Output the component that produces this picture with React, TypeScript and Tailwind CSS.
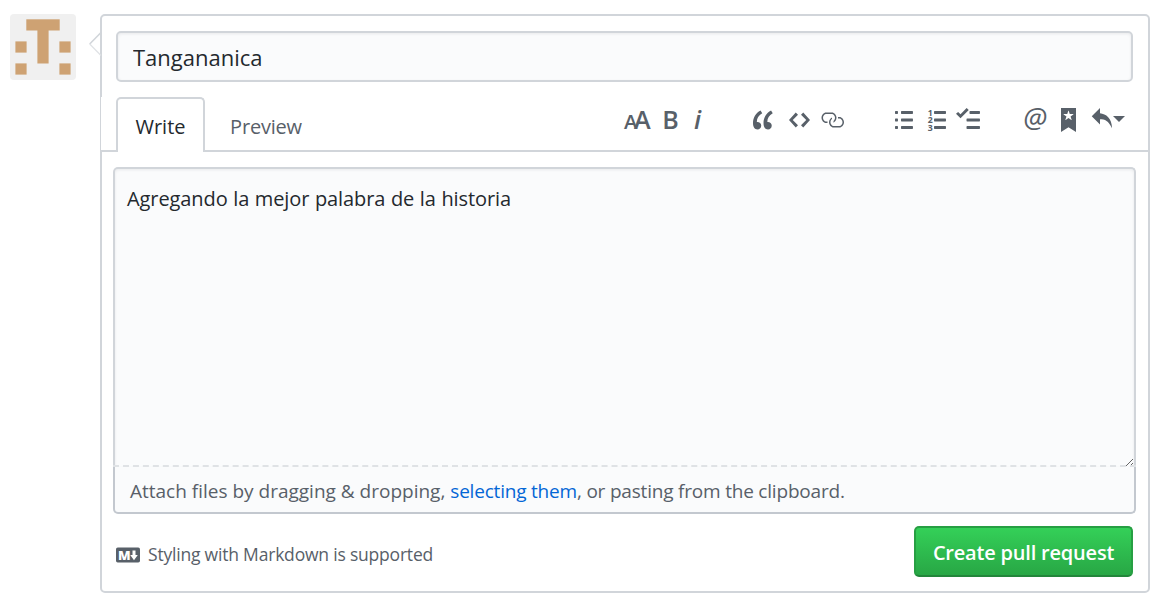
import type { ReactNode } from 'react';

const FONT = "font-['Open_Sans','Noto_Sans',sans-serif]";

type IconProps = { w: number; className?: string; children: ReactNode };

function Icon({ w, className = '', children }: IconProps) {
  return (
    <svg
      viewBox={`0 0 ${w} 16`}
      width={w * 1.5}
      height={24}
      fill="currentColor"
      aria-hidden="true"
      className={`block shrink-0 overflow-visible ${className}`}
    >
      {children}
    </svg>
  );
}

function Avatar() {
  return (
    <svg viewBox="0 0 66 66" className="mt-3.5 block h-[66px] w-[66px] shrink-0 rounded">
      <rect width="66" height="66" fill="#f0f0f0" />
      <g fill="#cea273">
        <rect x="16.3" y="5.3" width="33.4" height="11.2" />
        <rect x="27.4" y="16" width="11.2" height="33.5" />
        <rect x="5.4" y="27.4" width="11.2" height="11.2" />
        <rect x="49.4" y="27.4" width="11.2" height="11.2" />
        <rect x="5.4" y="49.4" width="11.2" height="11.2" />
        <rect x="49.4" y="49.4" width="11.2" height="11.2" />
      </g>
    </svg>
  );
}

function Toolbar() {
  return (
    <div className="flex pt-[11px] text-[#586069]">
      <button type="button" className="mr-3">
        <Icon w={18}>
          <text y="14" fontWeight="600">
            <tspan x="0" fontSize="13.4">A</tspan>
            <tspan x="6.7" fontSize="16.8">A</tspan>
          </text>
        </Icon>
      </button>
      <button type="button" className="mr-4">
        <Icon w={10}>
          <text x="-0.5" y="14" fontSize="16.8" fontWeight="600" textLength="11" lengthAdjust="spacingAndGlyphs">B</text>
        </Icon>
      </button>
      <button type="button" className="mr-[50px]">
        <Icon w={6}>
          <text x="0" y="14" fontSize="17.2" fontWeight="600" fontStyle="italic">i</text>
        </Icon>
      </button>
      <button type="button" className="mr-[15px]">
        <Icon w={14}>
          <path d="M6.16 3.5C3.73 5.06 2.55 6.67 2.55 9.36c.16-.05.3-.05.44-.05 1.27 0 2.5.86 2.5 2.41 0 1.61-1.03 2.61-2.5 2.61-1.9 0-2.99-1.52-2.99-4.25 0-3.8 1.75-6.53 5.02-8.42L6.16 3.5zm7 0c-2.43 1.56-3.61 3.17-3.61 5.86.16-.05.3-.05.44-.05 1.27 0 2.5.86 2.5 2.41 0 1.61-1.03 2.61-2.5 2.61-1.89 0-2.98-1.52-2.98-4.25 0-3.8 1.75-6.53 5.02-8.42l1.14 1.84h-.01z" />
        </Icon>
      </button>
      <button type="button" className="mr-2.5">
        <Icon w={14}>
          <path d="M9.5 3L8 4.5 11.5 8 8 11.5 9.5 13 14 8 9.5 3zm-5 0L0 8l4.5 5L6 11.5 2.5 8 6 4.5 4.5 3z" />
        </Icon>
      </button>
      <button type="button" className="mr-[51px]">
        <Icon w={16}>
          <path d="M4 9h1v1H4c-1.5 0-3-1.69-3-3.5S2.55 3 4 3h4c1.45 0 3 1.69 3 3.5 0 1.41-.91 2.72-2 3.25V8.59c.58-.45 1-1.27 1-2.09C10 5.22 8.98 4 8 4H4c-.98 0-2 1.22-2 2.5S3 9 4 9zm9-3h-1v1h1c1 0 2 1.22 2 2.5S13.98 12 13 12H9c-.98 0-2-1.22-2-2.5 0-.83.42-1.64 1-2.09V6.25c-1.09.53-2 1.84-2 3.25C6 11.31 7.55 13 9 13h4c1.45 0 3-1.69 3-3.5S14.5 6 13 6z" />
        </Icon>
      </button>
      <button type="button" className="mr-[15px]">
        <Icon w={12}>
          <path d="M2 13c0 .59 0 1-.59 1H.59C0 14 0 13.59 0 13c0-.59 0-1 .59-1h.81c.59 0 .59.41.59 1H2zm2.59-9h6.81c.59 0 .59-.41.59-1 0-.59 0-1-.59-1H4.59C4 2 4 2.41 4 3c0 .59 0 1 .59 1zM1.41 7H.59C0 7 0 7.41 0 8c0 .59 0 1 .59 1h.81c.59 0 .59-.41.59-1 0-.59 0-1-.59-1h.01zm0-5H.59C0 2 0 2.41 0 3c0 .59 0 1 .59 1h.81c.59 0 .59-.41.59-1 0-.59 0-1-.59-1h.01zm10 5H4.59C4 7 4 7.41 4 8c0 .59 0 1 .59 1h6.81c.59 0 .59-.41.59-1 0-.59 0-1-.59-1h.01zm0 5H4.59C4 12 4 12.41 4 13c0 .59 0 1 .59 1h6.81c.59 0 .59-.41.59-1 0-.59 0-1-.59-1h.01z" />
        </Icon>
      </button>
      <button type="button" className="mr-2.5">
        <Icon w={12}>
          <path d="M12.01 13c0 .59 0 1-.59 1H4.6c-.59 0-.59-.41-.59-1 0-.59 0-1 .59-1h6.81c.59 0 .59.41.59 1h.01zM4.6 4h6.81C12 4 12 3.59 12 3c0-.59 0-1-.59-1H4.6c-.59 0-.59.41-.59 1 0 .59 0 1 .59 1zm6.81 3H4.6c-.59 0-.59.41-.59 1 0 .59 0 1 .59 1h6.81C12 9 12 8.59 12 8c0-.59 0-1-.59-1z" />
          <text fontSize="5.8" fontWeight="700">
            <tspan x="-0.1" y="5">1</tspan>
            <tspan x="-0.1" y="10">2</tspan>
            <tspan x="-0.1" y="15">3</tspan>
          </text>
        </Icon>
      </button>
      <button type="button" className="mr-[43px]">
        <Icon w={16}>
          <path d="M15.41 9H7.59C7 9 7 8.59 7 8c0-.59 0-1 .59-1h7.81c.59 0 .59.41.59 1 0 .59 0 1-.59 1h.01zM9.59 4C9 4 9 3.59 9 3c0-.59 0-1 .59-1h5.81c.59 0 .59.41.59 1 0 .59 0 1-.59 1H9.59zM0 3.91l1.41-1.3L3 4.2 7.09 0 8.5 1.41 3 6.91l-3-3zM7.59 12h7.81c.59 0 .59.41.59 1 0 .59 0 1-.59 1H7.59C7 14 7 13.59 7 13c0-.59 0-1 .59-1z" />
        </Icon>
      </button>
      <button type="button" className="mr-[17px]">
        <Icon w={14}>
          <text x="0.1" y="13.5" fontSize="18.4" textLength="15.8" lengthAdjust="spacingAndGlyphs" fontStyle="italic">@</text>
        </Icon>
      </button>
      <button type="button" className="mr-[15px]">
        <Icon w={10}>
          <path d="M0 0v16l5-3.09L10 16V0zM8.22 4.25L6.36 5.61l.72 2.16c.06.22-.02.28-.2.17L5 6.6 3.12 7.94c-.19.11-.25.05-.2-.17l.72-2.16-1.86-1.36c-.17-.16-.14-.23.09-.23l2.3-.03.7-2.16h.25l.7 2.16 2.3.03c.23 0 .27.08.09.23h.01z" fillRule="evenodd" />
        </Icon>
      </button>
      <button type="button" className="flex">
        <Icon w={14}>
          <path d="M6 3.5c3.92.44 8 3.125 8 10-2.312-5.062-4.75-6-8-6V11L.5 5.5 6 0v3.5z" />
        </Icon>
        <svg viewBox="0 0 12 24" width="12" height="24" fill="currentColor" className="ml-px block">
          <path d="M0 8h12l-6 6z" />
        </svg>
      </button>
    </div>
  );
}

export default function App() {
  return (
    <div className={`flex h-[605px] w-[1160px] overflow-hidden bg-white pl-2.5 text-[20px] text-[#24292e] ${FONT}`}>
      <Avatar />
      <svg viewBox="0 0 14 26" className="z-10 mt-[31px] -mr-0.5 ml-3 block h-[26px] w-3.5 shrink-0">
        <path d="M12 1v24L1.5 13z" fill="#fff" />
        <path d="M13 1.5L1.7 13" stroke="#d1d5da" strokeWidth="1.6" fill="none" />
        <path d="M1.7 13L13 24.5" stroke="#dfe2e5" strokeWidth="1.2" fill="none" />
      </svg>
      <form className="mt-3.5 flex h-[579px] w-[1050px] flex-col rounded-[5px] border-2 border-[#d1d5da]">
        <input
          aria-label="Title"
          defaultValue="Tangananica"
          className="mt-[15px] mr-[15px] ml-3.5 h-[51px] shrink-0 rounded-[5px] border-2 border-[#d1d5da] bg-[#fafbfc] px-[15px] text-[22px] shadow-[inset_0_1px_3px_rgba(27,31,35,0.08)] outline-none"
        />
        <div className="z-10 mt-[15px] -ml-px flex h-[55px] shrink-0 border-b-2 border-[#d1d5da] bg-white pl-[15px]">
          <button type="button" className="h-[55px] w-[89px] rounded-t-[5px] border-2 border-b-0 border-[#d1d5da] bg-white pt-0.5">
            Write
          </button>
          <button type="button" className="w-[122px] pt-1.5 tracking-[-0.2px] text-[#586069]">
            Preview
          </button>
          <div className="ml-[297px]">
            <Toolbar />
          </div>
        </div>
        <div className="mt-[15px] mr-3 ml-[11px] flex flex-col">
          <textarea
            aria-label="Description"
            defaultValue="Agregando la mejor palabra de la historia"
            className="block h-[300px] resize-y rounded-t-[5px] border-2 border-b-0 border-[#d1d5da] bg-[#fafbfc] px-3 py-[15px] leading-[30px] tracking-[-0.09px] shadow-[inset_0_1px_3px_rgba(27,31,35,0.08)] outline-none [word-spacing:0.5px]"
          />
          <div className="z-10 -mt-0.5 border-t-2 border-dashed border-[#dfe2e5]" />
          <p className="flex h-[47px] items-center rounded-b-[5px] border-2 border-t-0 border-[#c3c8cf] bg-[#fafbfc] pt-[3px] pl-[15px] text-[19px] tracking-[-0.2px] whitespace-pre text-[#586069]">
            <span className="tracking-normal">Attach files by dragging &amp; dropping, </span>
            <a className="text-[#0366d6]">selecting them</a>, or pasting from the clipboard.
          </p>
        </div>
        <div className="mt-3 flex justify-between pr-[15px] pl-3.5">
          <div className="flex h-[58px] items-center text-[17.5px] tracking-[-0.2px] text-[#586069]">
            <Icon w={16} className="mr-2">
              <rect y="3" width="16" height="10" rx="1.15" />
              <text x="1.3" y="11" fontSize="8.4" fontWeight="800" fill="#fff" textLength="8.2" lengthAdjust="spacingAndGlyphs">M</text>
              <path d="M11.99 11.5L9.5 8H11V5h2v3h1.5z" fill="#fff" />
            </Icon>
            <span className="pb-0.5">Styling with Markdown is supported</span>
          </div>
          <button
            type="button"
            className="h-[51px] w-[219px] rounded-[5px] border-2 border-[#279f43] border-b-[#22863a] bg-linear-to-b from-[#34d058] to-[#28a745] pt-0.5 font-semibold tracking-[-0.2px] whitespace-nowrap text-white"
          >
            Create pull request
          </button>
        </div>
      </form>
    </div>
  );
}
